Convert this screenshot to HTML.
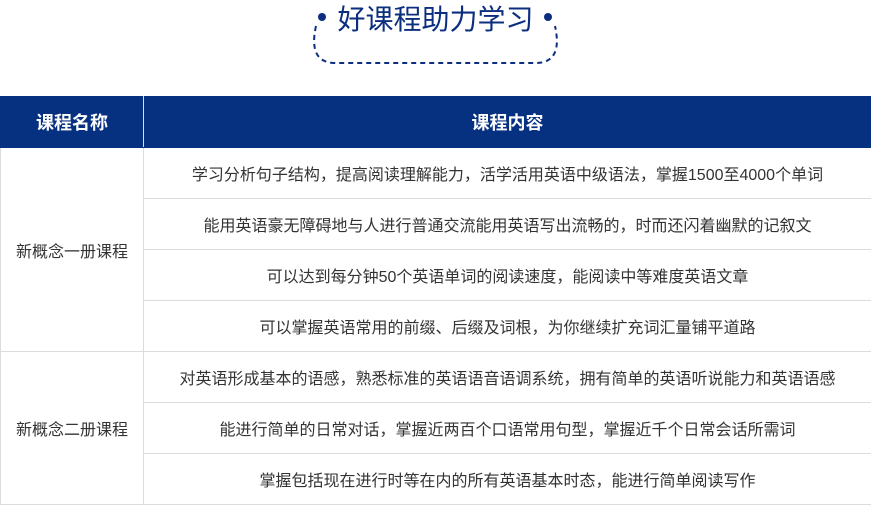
<!DOCTYPE html>
<html><head><meta charset="utf-8"><style>
body{margin:0;width:871px;height:530px;background:#fff;font-family:"Liberation Sans","Noto Sans CJK SC",sans-serif;position:relative;overflow:hidden}
.title{position:absolute;left:0;width:871px;top:1px;text-align:center;font-size:28px;color:#0b2f7e;line-height:38px}
table{position:absolute;left:0;top:96px;width:871px;border-collapse:collapse;table-layout:fixed}
td,th{border:1px solid #dcdcdc;text-align:center;font-size:16px;color:#333;height:50px;padding:0;white-space:nowrap}
th{background:#063080;color:#fff;font-size:18px;font-weight:bold;border-color:#063080;border-right-color:#dcdcdc}
tr>*:last-child{border-right:none}
</style></head><body>
<svg width="871" height="80" style="position:absolute;left:0;top:0">
<path d="M316 26 Q308 62 334 63 L537 63 Q563 62 555 26" fill="none" stroke="#0b2f7e" stroke-width="2" stroke-dasharray="5 4"/>
<circle cx="322" cy="17" r="4" fill="#0b2f7e"/><circle cx="548" cy="17" r="4" fill="#0b2f7e"/>
</svg>
<div class="title">好课程助力学习</div>
<table>
<colgroup><col style="width:143px"><col></colgroup>
<tr><th>课程名称</th><th>课程内容</th></tr>
<tr><td rowspan="4">新概念一册课程</td><td>学习分析句子结构，提高阅读理解能力，活学活用英语中级语法，掌握1500至4000个单词</td></tr>
<tr><td>能用英语豪无障碍地与人进行普通交流能用英语写出流畅的，时而还闪着幽默的记叙文</td></tr>
<tr><td>可以达到每分钟50个英语单词的阅读速度，能阅读中等难度英语文章</td></tr>
<tr><td>可以掌握英语常用的前缀、后缀及词根，为你继续扩充词汇量铺平道路</td></tr>
<tr><td rowspan="3">新概念二册课程</td><td>对英语形成基本的语感，熟悉标准的英语语音语调系统，拥有简单的英语听说能力和英语语感</td></tr>
<tr><td>能进行简单的日常对话，掌握近两百个口语常用句型，掌握近千个日常会话所需词</td></tr>
<tr><td>掌握包括现在进行时等在内的所有英语基本时态，能进行简单阅读写作</td></tr>
</table>
</body></html>
